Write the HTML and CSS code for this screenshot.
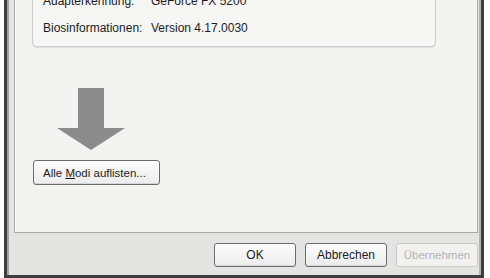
FILE: index.html
```html
<!DOCTYPE html>
<html lang="de">
<head>
<meta charset="utf-8">
<title>Eigenschaften</title>
<link rel="stylesheet" href="styles.css">
</head>
<body>
<div class="window">
  <div class="frame">
    <div class="panel">
      <div class="group">
        <div class="row"><span class="label">Adapterkennung:</span><span class="value">GeForce FX 5200</span></div>
        <div class="row"><span class="label">Biosinformationen:</span><span class="value">Version 4.17.0030</span></div>
      </div>
      <svg class="arrow" width="68" height="62" viewBox="0 0 68 62">
        <path d="M21 0 H47 V40 H68 L34 62 L0 40 H21 Z" fill="#8c8c8c"/>
      </svg>
      <button class="btn list-btn">Alle <u>M</u>odi auflisten...</button>
    </div>
    <div class="footer">
      <button class="btn">OK</button>
      <button class="btn">Abbrechen</button>
      <button class="btn disabled">Übernehmen</button>
    </div>
  </div>
</div>
</body>
</html>
```
FILE: styles.css
```css
html, body {
  margin: 0;
  padding: 0;
  background: #ffffff;
}
body {
  width: 490px;
  height: 278px;
  overflow: hidden;
  font-family: "Liberation Sans", Arial, sans-serif;
  font-size: 12px;
  color: #1c1c1c;
}
.window {
  margin-left: 4px;
  width: 480px;
  height: 278px;
  box-sizing: border-box;
  border: 3px solid #3e3e3e;
  border-top: none;
}
.frame {
  height: 100%;
  box-sizing: border-box;
  display: flex;
  flex-direction: column;
  background: #e4e4e3;
  border-left: 2px solid #a2a2a2;
  border-right: 2px solid #b4b4b4;
  padding: 0 1px 0 5px;
}
.panel {
  height: 233px;
  box-sizing: border-box;
  overflow: hidden;
  background: #f3f3f2;
  border: 1px solid #a8a8a8;
  border-top: none;
  box-shadow: inset 1px 0 0 #fbfbfb;
}
.group {
  width: 404px;
  box-sizing: border-box;
  margin: -18px 0 0 17px;
  padding: 6px 0 6px 10px;
  border: 1px solid #cdcdcd;
  border-radius: 5px;
  background: #f6f6f5;
  box-shadow: 0 1px 0 #dedede;
}
.row {
  display: flex;
  height: 24px;
  line-height: 24px;
}
.row + .row {
  margin-top: 3px;
}
.label {
  width: 108px;
}
.arrow {
  display: block;
  margin: 41px 0 0 42px;
}
.btn {
  font-family: "Liberation Sans", Arial, sans-serif;
  font-size: 12px;
  color: #1c1c1c;
  box-sizing: border-box;
  border: 1px solid #6c6c6c;
  border-radius: 3px;
  background: linear-gradient(#fdfdfd, #ececec);
  padding: 0;
  margin: 0;
  box-shadow: inset 0 -1px 0 #d6d6d6;
}
.list-btn {
  display: block;
  margin: 10px 0 0 18px;
  width: 127px;
  height: 25px;
  text-align: left;
  padding-left: 9px;
  font-size: 11.5px;
}
.footer {
  flex: 1;
  display: flex;
  justify-content: flex-end;
  align-items: flex-start;
  gap: 9px;
  padding-top: 10px;
}
.footer .btn {
  width: 82px;
  height: 24px;
}
.btn.disabled {
  color: #b4b4b4;
  border-color: #cbcbcb;
  box-shadow: none;
  background: #f1f1f0;
  font-size: 11.5px;
}
```
